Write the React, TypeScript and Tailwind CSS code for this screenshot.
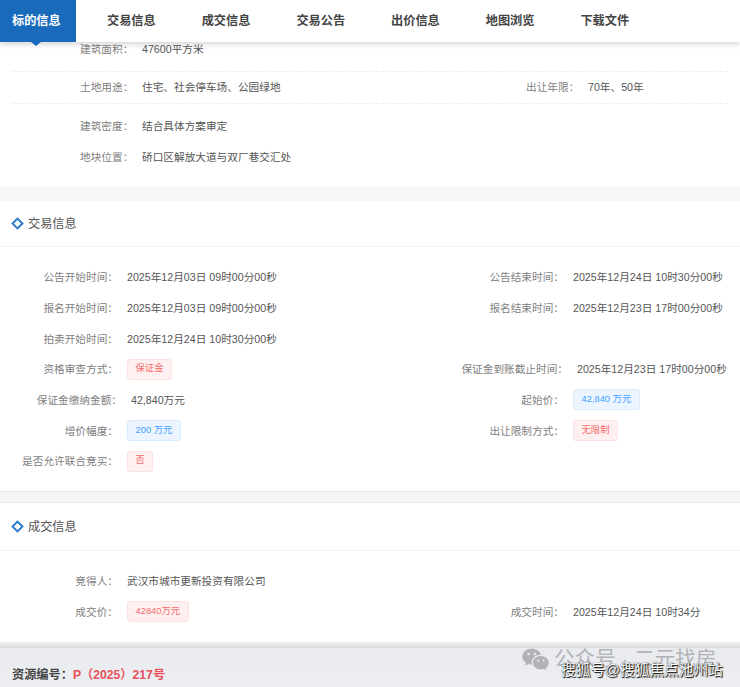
import { RiWechatFill } from "react-icons/ri";

type Tone = "red" | "blue";

type Field = {
  label: string;
  value: string;
  tone?: Tone;
  shift?: boolean;
};

const tabs = ["标的信息", "交易信息", "成交信息", "交易公告", "出价信息", "地图浏览", "下载文件"];

const tradeRows: [Field, Field | null][] = [
  [
    { label: "公告开始时间：", value: "2025年12月03日 09时00分00秒" },
    { label: "公告结束时间：", value: "2025年12月24日 10时30分00秒" },
  ],
  [
    { label: "报名开始时间：", value: "2025年12月03日 09时00分00秒" },
    { label: "报名结束时间：", value: "2025年12月23日 17时00分00秒" },
  ],
  [{ label: "拍卖开始时间：", value: "2025年12月24日 10时30分00秒" }, null],
  [
    { label: "资格审查方式：", value: "保证金", tone: "red" },
    { label: "保证金到账截止时间：", value: "2025年12月23日 17时00分00秒", shift: true },
  ],
  [
    { label: "保证金缴纳金额：", value: "42,840万元", shift: true },
    { label: "起始价：", value: "42,840 万元", tone: "blue" },
  ],
  [
    { label: "增价幅度：", value: "200 万元", tone: "blue" },
    { label: "出让限制方式：", value: "无限制", tone: "red" },
  ],
  [{ label: "是否允许联合竞买：", value: "否", tone: "red" }, null],
];

const dealRows: [Field, Field | null][] = [
  [{ label: "竞得人：", value: "武汉市城市更新投资有限公司" }, null],
  [
    { label: "成交价：", value: "42840万元", tone: "red" },
    { label: "成交时间：", value: "2025年12月24日 10时34分" },
  ],
];

const Tag = ({ tone, children }: { tone: Tone; children: string }) => (
  <span
    className={
      tone === "red"
        ? "mb-[2px] flex h-[21px] items-center rounded-[3px] border border-[#fde2e2] bg-[#fef0f0] px-[7.5px] text-[9.33px] text-[#f56c6c]"
        : "mb-[2px] flex h-[21px] items-center rounded-[3px] border border-[#d9ecff] bg-[#ecf5ff] px-[7.5px] text-[9.33px] text-[#409eff]"
    }
  >
    {children}
  </span>
);

const FieldCell = ({ field, labelWidth }: { field: Field; labelWidth: string }) => (
  <div className={field.shift ? "flex items-center pl-1" : "flex items-center"}>
    <div className={`${labelWidth} shrink-0 whitespace-nowrap text-[#808080]`}>
      <span className="float-right">{field.label}</span>
    </div>
    <div className="ml-[9px] whitespace-nowrap text-[#555555]">
      {field.tone ? <Tag tone={field.tone}>{field.value}</Tag> : field.value}
    </div>
  </div>
);

const SectionTitle = ({ title, height }: { title: string; height: string }) => (
  <div className={`flex ${height} items-center border-b border-[#f0f1f7] pt-[2px] pl-[13px]`}>
    <span className="mb-[2px] h-[9px] w-[9px] rotate-45 border-2 border-[#2f7ccb]" />
    <span className="ml-[6px] text-[12.2px] text-[#555555]">{title}</span>
  </div>
);

const InfoGrid = ({ rows }: { rows: [Field, Field | null][] }) => (
  <div className="grid auto-rows-[30.67px] grid-cols-[370px_370px]">
    {rows.map(([left, right], i) => (
      <div className="contents" key={i}>
        <FieldCell field={left} labelWidth="w-[118px]" />
        {right ? <FieldCell field={right} labelWidth="w-[194px]" /> : <div />}
      </div>
    ))}
  </div>
);

const App = () => {
  return (
    <div
      className="relative h-[687px] w-[740px] overflow-hidden bg-white text-[10.66px]"
      style={{ fontFamily: '"Liberation Sans", "Noto Sans CJK SC", sans-serif' }}
    >
      <nav className="relative z-10 flex h-[42px] bg-white shadow-[0_2px_6px_rgba(0,0,0,0.18)]">
        {tabs.map((tab, i) => (
          <div
            key={tab}
            className={
              i === 0
                ? "relative flex w-[76px] items-center bg-[#196abb] pt-[1px] pl-3 text-[12.2px] font-bold text-white"
                : "flex w-[94.7px] items-center pt-[1px] pl-[31px] text-[12.2px] font-bold whitespace-nowrap text-[#444444]"
            }
          >
            {tab}
            {i === 0 && (
              <span className="absolute top-[42px] left-[31px] h-0 w-0 border-x-[5px] border-t-[4px] border-x-transparent border-t-[#196abb]" />
            )}
          </div>
        ))}
      </nav>

      <section className="h-[145px] text-[#555555]">
        <div className="mx-3 flex h-[29.5px] items-start border-b border-dashed border-[#eeeeee] pl-[68px]">
          <div className="flex h-[15px] items-center">
            <span className="w-[62px] text-[#808080]">建筑面积：</span>
            <span>47600平方米</span>
          </div>
        </div>
        <div className="mx-3 flex h-[32px] items-center border-b border-dashed border-[#eeeeee] pt-[2px] pl-[68px]">
          <span className="w-[62px] text-[#808080]">土地用途：</span>
          <span className="w-[384px]">住宅、社会停车场、公园绿地</span>
          <span className="w-[62px] text-[#808080]">出让年限：</span>
          <span>70年、50年</span>
        </div>
        <div className="mx-3 mt-[8px] flex h-[30px] items-center pl-[68px]">
          <span className="w-[62px] text-[#808080]">建筑密度：</span>
          <span>结合具体方案审定</span>
        </div>
        <div className="mx-3 flex h-[32px] items-center pl-[68px]">
          <span className="w-[62px] text-[#808080]">地块位置：</span>
          <span>硚口区解放大道与双厂巷交汇处</span>
        </div>
      </section>

      <div className="h-[14px] bg-[#f5f6f8]" />

      <section className="h-[290px]">
        <SectionTitle title="交易信息" height="h-[46px]" />
        <div className="pt-[16px]">
          <InfoGrid rows={tradeRows} />
        </div>
      </section>

      <div className="h-[12px] border-y border-[#ebebeb] bg-[#f6f6f6]" />

      <section className="h-[139px]">
        <SectionTitle title="成交信息" height="h-[48px]" />
        <div className="pt-[16px]">
          <InfoGrid rows={dealRows} />
        </div>
      </section>

      <div className="h-[6px] bg-gradient-to-b from-[#f0f0f0] to-[#dcdcdc]" />

      <footer className="flex h-[39px] items-end bg-gradient-to-b from-[#e9ebef] to-[#eceef1] pb-[3px] pl-3 text-[12.2px] font-bold text-[#444444]">
        资源编号：<span className="text-[#e8505b]">P（2025）217号</span>
      </footer>

      <div className="absolute top-[645px] left-[521px] flex items-center text-[#b1b3b7]">
        <RiWechatFill size={29} />
        <span className="ml-[4px] text-[20.6px] leading-none whitespace-nowrap">公众号 · 二元找房</span>
      </div>
      <div className="absolute top-[663px] left-[561px] text-[14.7px] leading-none whitespace-nowrap text-white [text-shadow:1px_1px_1px_#000,0_0_1px_#000]">
        搜狐号@搜狐焦点池州站
      </div>
    </div>
  );
};

export default App;
